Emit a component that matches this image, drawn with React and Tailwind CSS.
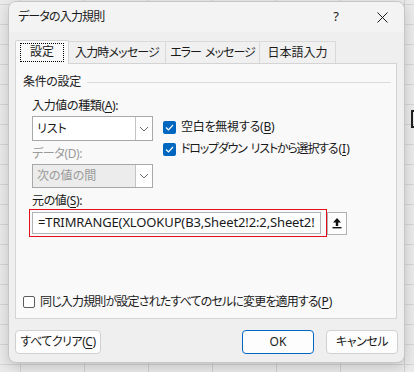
import React from "react";

const FONT = {
  fontFamily: '"Noto Sans", "Noto Sans CJK JP", sans-serif',
};

function Chevron() {
  return (
    <svg width="10" height="6" viewBox="0 0 10 6" fill="none">
      <polyline points="1,1 5,5 9,1" stroke="#6b6b6b" strokeWidth="1" />
    </svg>
  );
}

function Select({ value, disabled }) {
  return (
    <div
      className={`flex items-stretch border border-[#a8a8a8] ${
        disabled ? "bg-[#ececec] h-[24px]" : "bg-white h-[25px]"
      }`}
    >
      <div
        className={`flex-1 flex items-center pl-[4px] ${
          disabled ? "text-[#9a9a9a]" : "text-[#1a1a1a]"
        }`}
      >
        {value}
      </div>
      <div className="w-[17px] flex items-center justify-center bg-white border-l border-[#c4c4c4]">
        <Chevron />
      </div>
    </div>
  );
}

function Check({ checked }) {
  if (!checked) {
    return (
      <span className="w-[12px] h-[12px] rounded-[2px] border border-[#5c5c5c] bg-white shrink-0" />
    );
  }
  return (
    <span className="w-[13px] h-[13px] rounded-[2px] bg-[#0067c0] flex items-center justify-center shrink-0">
      <svg width="9" height="7" viewBox="0 0 9 7" fill="none">
        <polyline points="1,3.5 3.5,6 8,1" stroke="white" strokeWidth="1.2" />
      </svg>
    </span>
  );
}

function Tab({ label, active, w, tight }) {
  if (active) {
    return (
      <div
        className={`${w} h-[24px] bg-[#f9f9f9] border border-b-0 border-[#d4d4d4] rounded-t-[2px] flex items-center justify-center relative z-10 -mb-px pb-[1px]`}
      >
        <span className="border border-dotted border-black px-[9px] h-[19px] flex items-center">
          {label}
        </span>
      </div>
    );
  }
  return (
    <div
      className={`${w} h-[22px] bg-[#f0f0f0] border border-b-0 border-l-0 border-[#d9d9d9] flex items-center justify-center`}
    >
      <span className={tight}>{label}</span>
    </div>
  );
}

function U({ children }) {
  return <span className="underline underline-offset-2">{children}</span>;
}

export default function App() {
  return (
    <div
      className="relative w-[414px] h-[372px] overflow-hidden bg-[#ebebeb] bg-[linear-gradient(to_right,#d2d2d2_1px,transparent_1px),linear-gradient(to_bottom,#d6d6d6_1px,transparent_1px)] bg-[size:64px_20px] bg-[position:20px_4px] pl-[8px] pt-[1px] text-[12px] text-[#1a1a1a] [font-feature-settings:'palt']"
      style={FONT}
    >
      <div className="absolute left-[411px] top-[110px] w-[10px] h-[18px] border-2 border-[#1f1f1f]" />

      <div className="relative w-[397px] h-[362px] bg-[#efefef] rounded-[8px] border border-[#c6c6c6] shadow-[0_4px_14px_rgba(0,0,0,0.18)] flex flex-col overflow-hidden">
        {/* title bar */}
        <div className="h-[30px] bg-[#f3f3f3] flex items-center pl-[9px]">
          <span className="tracking-[-0.07em]">データの入力規則</span>
          <span className="ml-auto mr-[38px] text-[13px]">?</span>
          <span className="mr-[16px] flex items-center">
            <svg width="11" height="11" viewBox="0 0 11 11">
              <path d="M0.5 0.5 L10.5 10.5 M10.5 0.5 L0.5 10.5" stroke="#1a1a1a" strokeWidth="1" />
            </svg>
          </span>
        </div>

        <div className="flex-1 flex flex-col px-[6px] pt-[8px]">
          {/* tabs */}
          <div className="flex items-end">
            <Tab label="設定" active w="w-[54px]" />
            <Tab label="入力時メッセージ" w="w-[97px]" tight="tracking-[-0.07em]" />
            <Tab
              label={
                <>
                  エラー<span className="ml-[4px]">メッセージ</span>
                </>
              }
              w="w-[94px]"
              tight="tracking-[-0.08em]"
            />
            <Tab label="日本語入力" w="w-[76px]" />
          </div>

          {/* panel */}
          <div className="w-[382px] h-[256px] bg-[#f9f9f9] border border-[#d4d4d4] flex flex-col pl-[7px] pt-[10px] pb-[8px]">
            <div className="flex items-center h-[16px] gap-[6px]">
              <span className="tracking-[-0.03em]">条件の設定</span>
              <div className="flex-1 h-px bg-[#dcdcdc] mr-[5px]" />
            </div>

            <div className="flex mt-[8px] ml-[9px]">
              <div className="w-[121px] flex flex-col">
                <div className="h-[16px] leading-[16px] tracking-[-0.03em]">
                  入力値の種類(<U>A</U>):
                </div>
                <div className="mt-[2px]">
                  <Select value="リスト" />
                </div>
                <div className="h-[16px] leading-[16px] mt-[5px] text-[#9a9a9a] tracking-[-0.03em]">
                  データ(D):
                </div>
                <div className="mt-[2px]">
                  <Select value="次の値の間" disabled />
                </div>
              </div>
              <div className="flex flex-col ml-[10px] pt-[18px]">
                <div className="h-[22px] flex items-center gap-[5px]">
                  <Check checked />
                  <span className="tracking-[-0.02em]">
                    空白を無視する(<U>B</U>)
                  </span>
                </div>
                <div className="h-[22px] flex items-center gap-[5px]">
                  <Check checked />
                  <span className="tracking-[-0.1em]">
                    ドロップダウン
                    <span className="ml-[4px]">リストから選択する</span>
                    <span className="tracking-normal ml-[1px]">
                      (<U>I</U>)
                    </span>
                  </span>
                </div>
              </div>
            </div>

            <div className="h-[16px] leading-[16px] mt-[5px] ml-[9px] tracking-[-0.03em]">
              元の値(<U>S</U>):
            </div>
            <div className="flex items-center ml-[6px]">
              <div className="w-[298px] h-[28px] border border-[#e3101c] p-[2px] pr-[5px]">
                <div className="h-full bg-white border border-[#b3b3b3] flex items-center pl-[5px] text-[13px] overflow-hidden whitespace-nowrap tracking-[-0.01em]">
                  =TRIMRANGE(XLOOKUP(B3,Sheet2!2:2,Sheet2!
                </div>
              </div>
              <div className="w-[20px] h-[23px] bg-[#fdfdfd] border border-[#b0b0b0] flex items-center justify-center">
                <svg width="10" height="12" viewBox="0 0 10 12">
                  <path d="M5 1 L9 5.5 L6.2 5.5 L6.2 9 L3.8 9 L3.8 5.5 L1 5.5 Z" fill="#111" />
                  <rect x="0.5" y="10" width="9" height="1.4" fill="#111" />
                </svg>
              </div>
            </div>

            <div className="mt-auto flex items-center gap-[5px] h-[16px]">
              <Check />
              <span className="tracking-[-0.07em]">
                同じ入力規則が設定されたすべてのセルに変更を適用する
                <span className="tracking-normal">
                  (<U>P</U>)
                </span>
              </span>
            </div>
          </div>

          {/* buttons */}
          <div className="flex items-center mt-[11px]">
            <button className="w-[86px] h-[24px] bg-[#fdfdfd] border border-[#d0d0d0] rounded-[4px] flex items-center justify-center tracking-[-0.04em]">
              すべてクリア(<U>C</U>)
            </button>
            <button className="ml-auto w-[72px] h-[24px] bg-[#fdfdfd] border border-[#0067c0] rounded-[4px] flex items-center justify-center">
              OK
            </button>
            <button className="ml-[12px] w-[72px] h-[24px] bg-[#fdfdfd] border border-[#d0d0d0] rounded-[4px] flex items-center justify-center tracking-[-0.04em]">
              キャンセル
            </button>
          </div>
        </div>
      </div>
    </div>
  );
}
